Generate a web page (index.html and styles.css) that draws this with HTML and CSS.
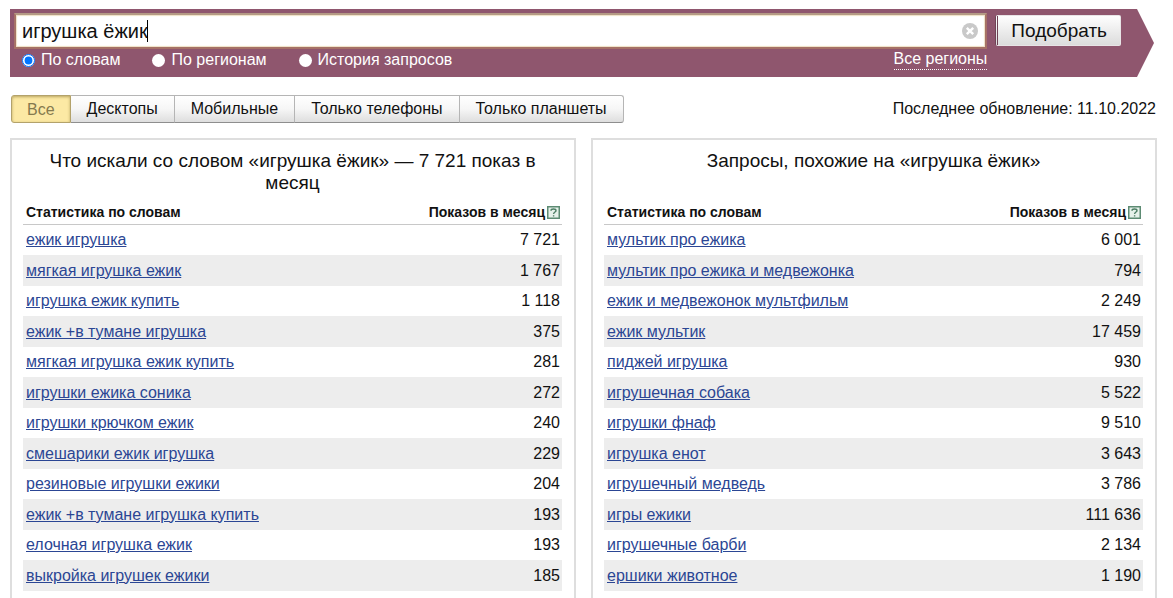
FILE: index.html
```html
<!DOCTYPE html>
<html lang="ru">
    <head>
        <meta charset="utf-8">
        <title>Подбор слов</title>

        <link rel="stylesheet" href="styles.css">
    </head>

    <body>
        <form class="search">
            <div class="search-main">
                <div class="field">
                    <input class="query" type="text" aria-label="Запрос" value="игрушка ёжик">
                    <span class="caret"></span>
                    <button class="clear" type="button" aria-label="Очистить">
                        <svg width="16" height="16" viewBox="0 0 16 16">
                            <circle cx="8" cy="8" r="8" fill="#c9c9c9"/>
                            <path d="M4.8 4.8l6.4 6.4M11.2 4.8l-6.4 6.4" stroke="#fff" stroke-width="2.4"/>
                        </svg>
                    </button>
                </div>
                <div class="options">
                    <label class="option"><input type="radio" name="mode" checked>По словам</label>
                    <label class="option"><input type="radio" name="mode">По регионам</label>
                    <label class="option"><input type="radio" name="mode">История запросов</label>
                    <a class="regions" href="#">Все регионы</a>
                </div>
            </div>
            <button class="submit" type="submit">Подобрать</button>
        </form>

        <div class="toolbar">
            <div class="tabs">
                <button class="tab active">Все</button>
                <button class="tab">Десктопы</button>
                <button class="tab">Мобильные</button>
                <button class="tab">Только телефоны</button>
                <button class="tab">Только планшеты</button>
            </div>
            <span>Последнее обновление: 11.10.2022</span>
        </div>

        <div class="panels">
            <div class="panel">
                <h2>Что искали со словом «игрушка ёжик» — 7 721 показ в месяц</h2>
                <table>
                    <thead>
                        <tr>
                            <th>Статистика по словам</th>
                            <th><span class="count-head">Показов в месяц<a class="help" href="#" aria-label="Помощь"><svg width="13" height="13" viewBox="0 0 13 13"><rect x=".75" y=".75" width="11.5" height="11.5" fill="#e6f1ea" stroke="#5d8b73" stroke-width="1.5"/><path d="M4 4.7C4 3.4 5 3 6.5 3S9 3.6 9 4.7C9 6.1 6.6 6 6.6 8M6.6 9.2v1.4" fill="none" stroke="#4c7d64" stroke-width="1.4"/></svg></a></span></th>
                        </tr>
                    </thead>
                    <tbody>
                        <tr><td><a href="#">ежик игрушка</a></td><td>7 721</td></tr>
                        <tr><td><a href="#">мягкая игрушка ежик</a></td><td>1 767</td></tr>
                        <tr><td><a href="#">игрушка ежик купить</a></td><td>1 118</td></tr>
                        <tr><td><a href="#">ежик +в тумане игрушка</a></td><td>375</td></tr>
                        <tr><td><a href="#">мягкая игрушка ежик купить</a></td><td>281</td></tr>
                        <tr><td><a href="#">игрушки ежика соника</a></td><td>272</td></tr>
                        <tr><td><a href="#">игрушки крючком ежик</a></td><td>240</td></tr>
                        <tr><td><a href="#">смешарики ежик игрушка</a></td><td>229</td></tr>
                        <tr><td><a href="#">резиновые игрушки ежики</a></td><td>204</td></tr>
                        <tr><td><a href="#">ежик +в тумане игрушка купить</a></td><td>193</td></tr>
                        <tr><td><a href="#">елочная игрушка ежик</a></td><td>193</td></tr>
                        <tr><td><a href="#">выкройка игрушек ежики</a></td><td>185</td></tr>
                    </tbody>
                </table>
            </div>

            <div class="panel">
                <h2>Запросы, похожие на «игрушка ёжик»</h2>
                <table>
                    <thead>
                        <tr>
                            <th>Статистика по словам</th>
                            <th><span class="count-head">Показов в месяц<a class="help" href="#" aria-label="Помощь"><svg width="13" height="13" viewBox="0 0 13 13"><rect x=".75" y=".75" width="11.5" height="11.5" fill="#e6f1ea" stroke="#5d8b73" stroke-width="1.5"/><path d="M4 4.7C4 3.4 5 3 6.5 3S9 3.6 9 4.7C9 6.1 6.6 6 6.6 8M6.6 9.2v1.4" fill="none" stroke="#4c7d64" stroke-width="1.4"/></svg></a></span></th>
                        </tr>
                    </thead>
                    <tbody>
                        <tr><td><a href="#">мультик про ежика</a></td><td>6 001</td></tr>
                        <tr><td><a href="#">мультик про ежика и медвежонка</a></td><td>794</td></tr>
                        <tr><td><a href="#">ежик и медвежонок мультфильм</a></td><td>2 249</td></tr>
                        <tr><td><a href="#">ежик мультик</a></td><td>17 459</td></tr>
                        <tr><td><a href="#">пиджей игрушка</a></td><td>930</td></tr>
                        <tr><td><a href="#">игрушечная собака</a></td><td>5 522</td></tr>
                        <tr><td><a href="#">игрушки фнаф</a></td><td>9 510</td></tr>
                        <tr><td><a href="#">игрушка енот</a></td><td>3 643</td></tr>
                        <tr><td><a href="#">игрушечный медведь</a></td><td>3 786</td></tr>
                        <tr><td><a href="#">игры ежики</a></td><td>111 636</td></tr>
                        <tr><td><a href="#">игрушечные барби</a></td><td>2 134</td></tr>
                        <tr><td><a href="#">ершики животное</a></td><td>1 190</td></tr>
                    </tbody>
                </table>
            </div>
        </div>
    </body>
</html>
```
FILE: styles.css
```css
* {
    box-sizing: border-box;
}

body {
    display: flex;
    flex-direction: column;
    height: 100vh;
    margin: 0;
    padding: 9px 16px 0 10px;
    overflow: hidden;

    font-family: "Liberation Sans", Arial, sans-serif;
    font-size: 16px;
    line-height: 20px;
    color: #111;
    background-color: white;
}

button,
input {
    font-family: inherit;
}

.search {
    display: flex;
    align-items: flex-start;
    gap: 8px;
    flex-shrink: 0;
    height: 68px;
    margin-right: 3px;
    padding: 4px 33px 0 4px;

    background-color: #8f566e;
    clip-path: polygon(0 0, calc(100% - 17px) 0, 100% 50%, calc(100% - 17px) 100%, 0 100%);
}

.search-main {
    flex: 1;
}

.field {
    position: relative;
    display: flex;
    align-items: center;
    height: 36px;
    padding-right: 7px;

    background-color: white;
    border: 2px solid #a67166;
    border-top-color: #b49a85;
    box-shadow: inset 0 0 1px 1px #eee0c4;
}

.query {
    flex: 1;
    height: 32px;
    padding: 0 6px;

    font-size: 20px;
    color: #111;
    background: none;
    border: none;
    outline: none;
}

.caret {
    position: absolute;
    left: 131px;
    top: 5px;
    width: 1px;
    height: 22px;

    background-color: black;
}

.clear {
    display: flex;
    padding: 0;

    background: none;
    border: none;
}

.options {
    display: flex;
    padding: 0 0 0 8px;

    color: white;
}

.option {
    display: flex;
    align-items: center;
    gap: 6px;
    margin-right: 32px;
    padding-top: 1px;
}

.option input {
    width: 13px;
    height: 13px;
    margin: 0;
}

.option input:not(:checked) {
    appearance: none;

    background-color: white;
    border-radius: 50%;
}

.regions {
    margin-left: auto;

    line-height: 20px;
    color: white;
    text-decoration: none;
    border-bottom: 1px dotted white;
}

.submit {
    height: 31px;
    margin-top: 2px;
    padding: 0 13px;

    font-size: 19px;
    color: #111;
    background: linear-gradient(#fefefe, #dcdcdc);
    border: 1px solid #e8e4e6;
    border-left: 3px double #6f4256;
    border-radius: 2px;
}

.toolbar {
    display: flex;
    justify-content: space-between;
    align-items: center;
    flex-shrink: 0;
    margin-top: 18px;
    padding: 0 1px;
}

.tabs {
    display: flex;
}

.tab {
    height: 28px;
    padding: 0 16px;

    font-size: 16px;
    color: #111;
    background: linear-gradient(#fff, #f6f6f6 50%, #dedede);
    border: 1px solid #b5b5b5;
    border-left: none;
    border-bottom-color: #8e8e8e;
}

.tab:last-child {
    border-radius: 0 3px 3px 0;
}

.tab.active {
    padding: 2px 15px 0;

    color: #857a4e;
    background: #fce9a4;
    border: 1px solid #b3a26b;
    border-radius: 3px 0 0 3px;
    box-shadow: inset 0 1px 3px #b9a561;
}

.panels {
    display: grid;
    grid-template-columns: 1fr 1fr;
    gap: 15px;
    flex: 1 0 auto;
    margin-top: 15px;
}

.panel {
    padding: 10px 12px 20px 11px;

    border: 2px solid #dedede;
}

h2 {
    min-height: 44px;
    margin: 0;
    padding: 0 16px;

    font-size: 19px;
    font-weight: normal;
    line-height: 22px;
    text-align: center;
}

table {
    width: 100%;
    margin-top: 6px;
    border-collapse: separate;
    border-spacing: 0;
}

th {
    height: 25px;
    padding: 0 3px;

    font-size: 14px;
    text-align: left;
    border-bottom: 1px solid #c8c8c8;
}

td {
    height: 30px;
    padding: 0 3px;
}

th:last-child,
td:last-child {
    padding-right: 2px;
    text-align: right;
}

tbody tr:nth-child(even) td {
    height: 31px;
    background-color: #ededed;
}

td a {
    color: #2b4694;
}

.count-head {
    display: inline-flex;
    align-items: center;
    gap: 2px;
}

.help {
    display: flex;
}
```
